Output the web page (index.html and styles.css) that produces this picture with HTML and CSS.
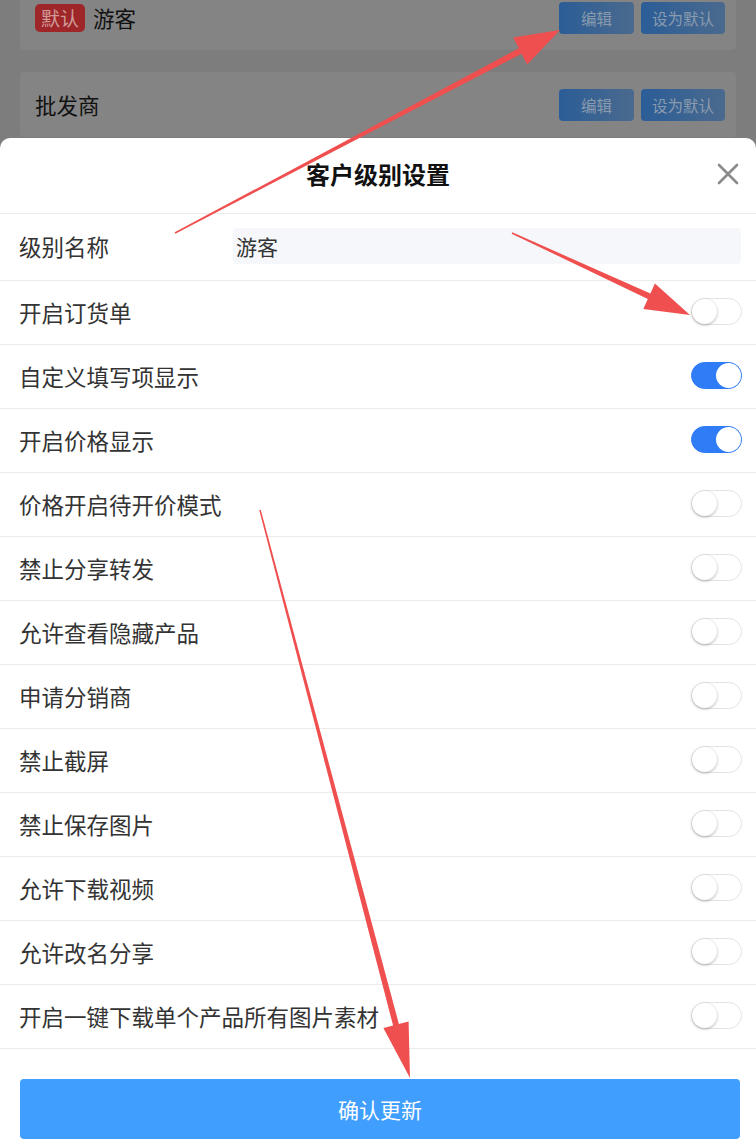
FILE: index.html
```html
<!DOCTYPE html>
<html lang="zh-CN">
<head>
    <meta charset="UTF-8">
    <title>客户级别设置</title>
    <link rel="stylesheet" href="styles.css">
</head>
<body>
    <!-- level list behind the sheet -->
    <div class="list">
        <div class="card">
            <span class="badge">默认</span>
            <span class="card_name">游客</span>
            <span class="btn">编辑</span>
            <span class="btn btn_wide">设为默认</span>
        </div>
        <div class="card">
            <span class="card_name">批发商</span>
            <span class="btn">编辑</span>
            <span class="btn btn_wide">设为默认</span>
        </div>
    </div>

    <!-- bottom sheet -->
    <div class="sheet">
        <div class="sheet_head">
            <span class="sheet_title">客户级别设置</span>
            <svg class="close_btn" width="22" height="22" viewBox="0 0 22 22">
                <path d="M2 2 L20 20 M20 2 L2 20" stroke="#8a8a8a" stroke-width="2.6" stroke-linecap="round"/>
            </svg>
        </div>
        <div class="row row_name">
            <span class="label">级别名称</span>
            <div class="name_input">游客</div>
        </div>
        <div class="row"><span class="label">开启订货单</span><span class="switch"></span></div>
        <div class="row"><span class="label">自定义填写项显示</span><span class="switch on"></span></div>
        <div class="row"><span class="label">开启价格显示</span><span class="switch on"></span></div>
        <div class="row"><span class="label">价格开启待开价模式</span><span class="switch"></span></div>
        <div class="row"><span class="label">禁止分享转发</span><span class="switch"></span></div>
        <div class="row"><span class="label">允许查看隐藏产品</span><span class="switch"></span></div>
        <div class="row"><span class="label">申请分销商</span><span class="switch"></span></div>
        <div class="row"><span class="label">禁止截屏</span><span class="switch"></span></div>
        <div class="row"><span class="label">禁止保存图片</span><span class="switch"></span></div>
        <div class="row"><span class="label">允许下载视频</span><span class="switch"></span></div>
        <div class="row"><span class="label">允许改名分享</span><span class="switch"></span></div>
        <div class="row"><span class="label">开启一键下载单个产品所有图片素材</span><span class="switch"></span></div>
        <div class="submit">确认更新</div>
    </div>

    <!-- annotation arrows -->
    <svg class="marks" width="756" height="1146" viewBox="0 0 756 1146">
        <g fill="#f04f4f">
            <polygon points="175.35,233.66 521.6,53.65 527.2,64.4 560,30 513.2,37.6 518.8,48.35 174.65,232.34"/>
            <polygon points="511.69,233.68 647.8,298.9 643.3,309.0 690,315 654.9,283.4 650.4,293.5 512.31,232.32"/>
            <polygon points="259.27,510.19 393.1,1025.6 383.4,1028.1 410,1078 408.6,1021.5 398.9,1024.0 260.73,509.81"/>
        </g>
    </svg>
</body>
</html>
```

FILE: styles.css
```css
/*  PAGE  */
body {
    margin: 0;
    background-color: #7d7d7d;
    font-family: "Noto Sans CJK SC", "Noto Sans", sans-serif;
    overflow: hidden;
}
.list {
    margin-top: -15px;
    padding: 0 20px;
    display: flex;
    flex-direction: column;
    gap: 22px;
}
.card {
    height: 65px;
    background-color: #848484;
    border-radius: 4px;
    padding: 0 11px 0 15px;
    display: flex;
    align-items: center;
}
.badge {
    background-color: #9e2628;
    color: #d09a9a;
    font-size: 19px;
    line-height: 28px;
    padding: 0 6px;
    border-radius: 5px;
    margin-right: 8px;
}
.card_name {
    font-size: 21.5px;
    color: #111;
    flex: 1;
}
.btn {
    width: 75px;
    height: 32px;
    line-height: 32px;
    text-align: center;
    font-size: 15.5px;
    color: #8b9bae;
    border-radius: 4px;
    background: linear-gradient(90deg, #2b5d97, #4a6a8e);
}
.btn_wide {
    width: 84px;
    margin-left: 7px;
}

/*  SHEET  */
.sheet {
    position: fixed;
    top: 138px;
    left: 0;
    right: 0;
    bottom: 0;
    background-color: white;
    border-radius: 10px 10px 0 0;
    display: flex;
    flex-direction: column;
}
.sheet_head {
    height: 71px;
    padding-bottom: 4px;
    border-bottom: 1px solid #ebebeb;
    display: flex;
    align-items: center;
    justify-content: center;
    position: relative;
}
.sheet_title {
    font-size: 24px;
    font-weight: bold;
    color: #111;
}
.close_btn {
    position: absolute;
    right: 17px;
    top: 25px;
}
.row {
    height: 61px;
    padding: 0 14px 2px 19px;
    border-bottom: 1px solid #ebebeb;
    display: flex;
    align-items: center;
    justify-content: space-between;
}
.row_name {
    height: 64px;
    justify-content: flex-start;
    padding-right: 15px;
}
.label {
    font-size: 22.5px;
    color: #333;
}
.row_name .label {
    width: 214px;
}
.name_input {
    flex: 1;
    height: 36px;
    line-height: 36px;
    background-color: #f5f7fa;
    border-radius: 4px;
    padding-left: 3px;
    font-size: 21px;
    color: #333;
}

/*  SWITCH  */
.switch {
    width: 49px;
    height: 25px;
    border: 1px solid #e3e3e3;
    border-radius: 14px;
    background-color: white;
    position: relative;
}
.switch::after {
    content: "";
    position: absolute;
    top: 0;
    left: 0;
    width: 25px;
    height: 25px;
    border-radius: 50%;
    background-color: white;
    box-shadow: 0 1px 3px rgba(0, 0, 0, 0.3);
}
.switch.on {
    background-color: #2f7cf6;
    border-color: #2f7cf6;
}
.switch.on::after {
    left: 24px;
    box-shadow: none;
}

.submit {
    margin: 30px 16px 0 20px;
    height: 60px;
    line-height: 60px;
    border-radius: 4px;
    background-color: #409eff;
    color: white;
    text-align: center;
    font-size: 21px;
}

/*  ARROWS  */
.marks {
    position: absolute;
    top: 0;
    left: 0;
    pointer-events: none;
}
```
